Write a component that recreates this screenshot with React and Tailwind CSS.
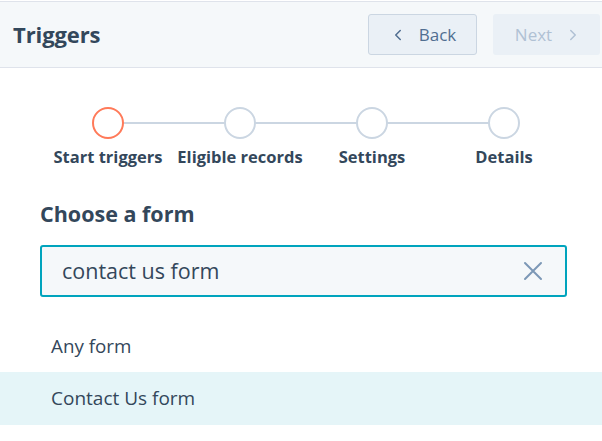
import { ChevronLeft, ChevronRight } from 'lucide-react';

const steps = ['Start triggers', 'Eligible records', 'Settings', 'Details'];

export default function App() {
  return (
    <div className="w-[602px] h-[441px] bg-white text-[#33475b] font-['Open_Sans',sans-serif] overflow-hidden">
      {/* Header */}
      <div className="mt-px h-[67px] bg-[#f5f8fa] border-t border-b border-[#dfe3eb] flex items-center justify-between pl-[13px] pr-[2px]">
        <h1 className="text-[22px] font-bold tracking-[-0.1px]">Triggers</h1>
        <div className="flex gap-4">
          <button className="w-[109px] h-[41px] rounded-[3px] border border-[#cbd6e2] bg-[#eaf0f6] text-[#506e91] text-[17px] flex items-center justify-center gap-3">
            <ChevronLeft size={18} strokeWidth={2} />
            Back
          </button>
          <button className="w-[107px] h-[41px] rounded-[3px] bg-[#eaf0f6] text-[#b0c1d4] text-[17px] flex items-center justify-center gap-3 pl-1">
            Next
            <ChevronRight size={18} strokeWidth={2} />
          </button>
        </div>
      </div>

      {/* Stepper */}
      <div className="relative mt-[39px] pl-[42px]">
        <div className="absolute top-[15px] left-[108px] w-[396px] h-[2px] bg-[#cbd6e2]" />
        <div className="grid grid-cols-4 w-[528px]">
          {steps.map((s, i) => (
            <div key={s} className="flex flex-col items-center">
              <div
                className={
                  'relative w-[32px] h-[32px] rounded-full border-2 bg-white ' +
                  (i === 0 ? 'border-[#ff7a59]' : 'border-[#cbd6e2]')
                }
              />
              <span className="mt-[6px] text-[16.5px] font-bold whitespace-nowrap">{s}</span>
            </div>
          ))}
        </div>
      </div>

      {/* Form chooser */}
      <div className="px-[40px] pt-[28px]">
        <h2 className="text-[21.5px] font-bold">Choose a form</h2>
        <div className="mt-[15px] w-[527px] h-[52px] rounded-[3px] border-2 border-[#00a4bd] bg-[#f5f8fa] flex items-center justify-between pl-[20px] pr-[22px]">
          <span className="text-[21.5px]">contact us form</span>
          <svg width="20" height="20" viewBox="0 0 20 20" fill="none" stroke="#7c98b6" strokeWidth="2" strokeLinecap="round">
            <path d="M2 2 L18 18 M18 2 L2 18" />
          </svg>
        </div>
      </div>

      <div className="mt-[23px]">
        <div className="h-[52px] flex items-center pl-[51px] text-[18.8px]">Any form</div>
        <div className="h-[53px] flex items-center pl-[51px] text-[19px] bg-[#e5f5f8]">Contact Us form</div>
      </div>
    </div>
  );
}
